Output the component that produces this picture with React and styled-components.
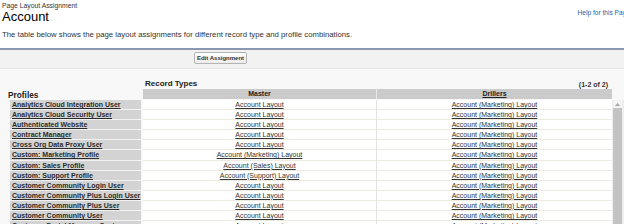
import React from "react";
import styled, { createGlobalStyle } from "styled-components";

const Global = createGlobalStyle`
  html, body { margin: 0; padding: 0; background: #ffffff; overflow: hidden; }
  body { font-family: "Liberation Sans", Arial, sans-serif; color: #222; }
`;

const Page = styled.div`
  width: 624px;
  padding-top: 2px;
`;

const TopRow = styled.div`
  display: flex;
  justify-content: space-between;
  align-items: flex-start;
  padding-left: 2px;
  margin-right: -6px;
`;

const TitleBlock = styled.div`
  display: flex;
  flex-direction: column;
`;

const Breadcrumb = styled.div`
  font-size: 6.8px;
  line-height: 8px;
  color: #333;
`;

const Title = styled.h1`
  margin: 0;
  font-size: 13px;
  line-height: 14px;
  font-weight: normal;
  color: #000;
`;

const Help = styled.a`
  margin-top: 7px;
  font-size: 6.6px;
  line-height: 8px;
  color: #1c5fa8;
  text-decoration: none;
`;

const Desc = styled.p`
  margin: 6px 0 0 2px;
  font-size: 7.75px;
  line-height: 9px;
  color: #333;
`;

const ButtonBar = styled.div`
  margin-top: 9px;
  border-top: 2px solid #8a99ae;
  background: #f2f2f2;
  border-bottom: 1px solid #e6e6e6;
  height: 16px;
  padding: 2px 0 0 194px;
  box-sizing: content-box;
`;

const Button = styled.button`
  height: 12px;
  width: 53px;
  padding: 0;
  border: 1px solid #b3b3b3;
  border-radius: 2px;
  background: linear-gradient(#ffffff, #ececec);
  font-family: "Liberation Sans", Arial, sans-serif;
  font-size: 6px;
  font-weight: bold;
  color: #333;
  display: flex;
  align-items: center;
  justify-content: center;
`;

const TableArea = styled.div`
  background: #f8f8f8;
  padding: 10px 0 0 8px;
`;

const CaptionRow = styled.div`
  display: grid;
  grid-template-columns: 137px 467px;
  height: 10px;
  align-items: end;
`;

const Caption = styled.div`
  display: flex;
  justify-content: space-between;
  align-items: flex-end;
`;

const CaptionTitle = styled.span`
  font-size: 8px;
  font-weight: bold;
  line-height: 10px;
  color: #222;
`;

const Count = styled.span`
  font-size: 7px;
  font-weight: bold;
  line-height: 9px;
  color: #333;
  margin-right: 4px;
`;

const Cols = `
  display: grid;
  grid-template-columns: 135px 233px 236px;
`;

const HeadRow = styled.div`
  ${Cols}
  height: 9.5px;
  align-items: stretch;
`;

const ProfilesLabel = styled.div`
  font-size: 8.3px;
  font-weight: bold;
  line-height: 9px;
  color: #222;
  align-self: end;
  margin-bottom: -1px;
`;

const HeadCell = styled.div`
  background: #cbcbcb;
  font-size: 7px;
  font-weight: bold;
  line-height: 9.5px;
  text-align: center;
  color: #222;
  text-decoration: ${(p) => (p.$link ? "underline" : "none")};
  border-left: ${(p) => (p.$divider ? "1px solid #e9e9e9" : "0")};
`;

const Body = styled.div`
  display: flex;
  margin-top: 1.5px;
`;

const Rows = styled.div`
  width: 604px;
`;

const Row = styled.div`
  ${Cols}
  height: 10.1px;
`;

const ProfileCell = styled.a`
  margin: 0 2px 0 2px;
  background: #d3d3d3;
  border-bottom: 1px solid #f2f2f2;
  font-size: 7px;
  font-weight: bold;
  line-height: 9px;
  padding-left: 2px;
  color: #2b2b2b;
  text-decoration: underline;
  white-space: nowrap;
  overflow: hidden;
`;

const DataCell = styled.div`
  background: #ffffff;
  border-bottom: 1px solid #ecebdd;
  border-left: ${(p) => (p.$divider ? "1px solid #e3e3e3" : "0")};
  font-size: 7px;
  line-height: 9px;
  text-align: center;
  color: #333;
  white-space: nowrap;
`;

const LayoutLink = styled.a`
  color: #333;
  text-decoration: underline;
`;

const Scrollbar = styled.div`
  width: 12px;
  background: #eeeeee;
  display: flex;
  flex-direction: column;
  align-items: flex-start;
  height: 140px;
`;

const Arrow = styled.div`
  width: 9px;
  height: 8px;
  margin-left: 1px;
  display: flex;
  align-items: center;
  justify-content: center;
  background: #f4f4f4;
`;

const Thumb = styled.div`
  width: 9px;
  margin-left: 1px;
  flex: 1;
  background: #c3c3c3;
`;

const profiles = [
  ["Analytics Cloud Integration User", "Account Layout"],
  ["Analytics Cloud Security User", "Account Layout"],
  ["Authenticated Website", "Account Layout"],
  ["Contract Manager", "Account Layout"],
  ["Cross Org Data Proxy User", "Account Layout"],
  ["Custom: Marketing Profile", "Account (Marketing) Layout"],
  ["Custom: Sales Profile", "Account (Sales) Layout"],
  ["Custom: Support Profile", "Account (Support) Layout"],
  ["Customer Community Login User", "Account Layout"],
  ["Customer Community Plus Login User", "Account Layout"],
  ["Customer Community Plus User", "Account Layout"],
  ["Customer Community User", "Account Layout"],
  ["Customer Portal Manager Custom", "Account Layout"],
];

export default function App() {
  return (
    <>
      <Global />
      <Page>
        <TopRow>
          <TitleBlock>
            <Breadcrumb>Page Layout Assignment</Breadcrumb>
            <Title>Account</Title>
          </TitleBlock>
          <Help href="#">Help for this Page</Help>
        </TopRow>
        <Desc>
          The table below shows the page layout assignments for different record type and profile combinations.
        </Desc>
        <ButtonBar>
          <Button>Edit Assignment</Button>
        </ButtonBar>
        <TableArea>
          <CaptionRow>
            <span />
            <Caption>
              <CaptionTitle>Record Types</CaptionTitle>
              <Count>(1-2 of 2)</Count>
            </Caption>
          </CaptionRow>
          <HeadRow>
            <ProfilesLabel>Profiles</ProfilesLabel>
            <HeadCell>Master</HeadCell>
            <HeadCell $link $divider>Drillers</HeadCell>
          </HeadRow>
          <Body>
            <Rows>
              {profiles.map(([name, master]) => (
                <Row key={name}>
                  <ProfileCell href="#">{name}</ProfileCell>
                  <DataCell>
                    <LayoutLink href="#">{master}</LayoutLink>
                  </DataCell>
                  <DataCell $divider>
                    <LayoutLink href="#">Account (Marketing) Layout</LayoutLink>
                  </DataCell>
                </Row>
              ))}
            </Rows>
            <Scrollbar>
              <Arrow>
                <svg width="5" height="3" viewBox="0 0 5 3">
                  <path d="M0 3 L2.5 0 L5 3 Z" fill="#a5a5a5" />
                </svg>
              </Arrow>
              <Thumb />
            </Scrollbar>
          </Body>
        </TableArea>
      </Page>
    </>
  );
}
